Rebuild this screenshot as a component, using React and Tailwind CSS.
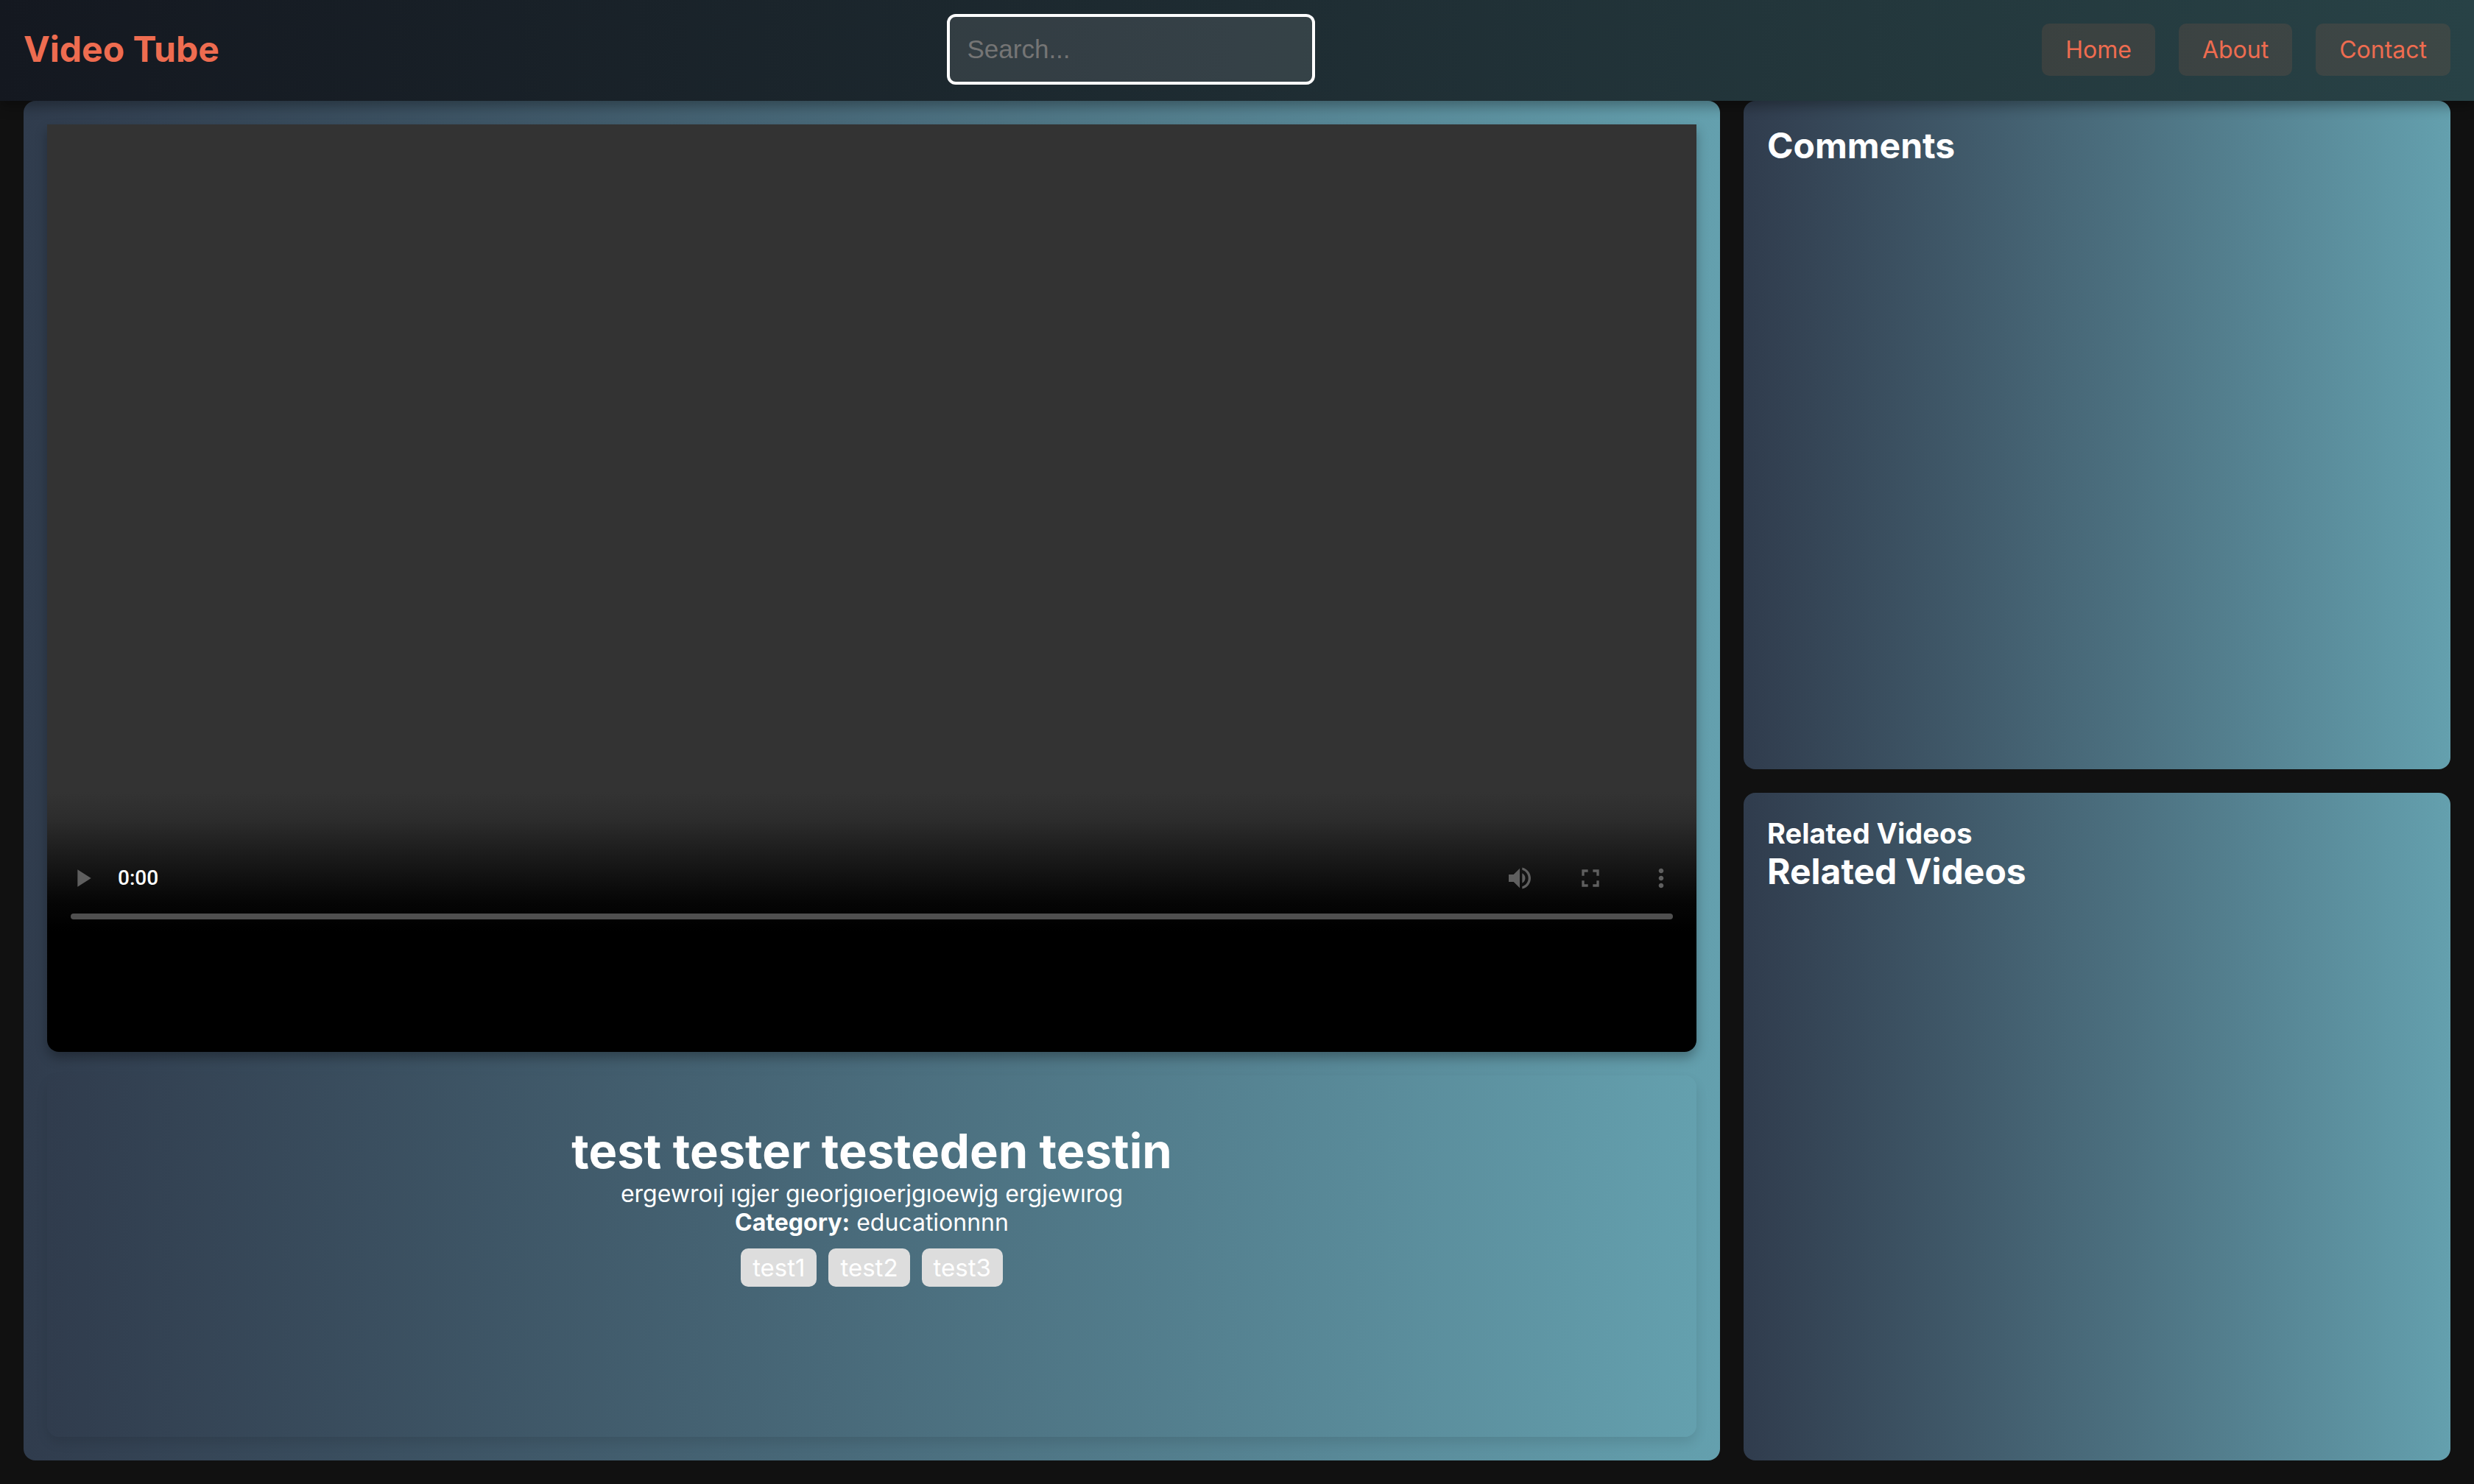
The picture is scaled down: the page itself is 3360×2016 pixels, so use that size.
const navItems = ["Home", "About", "Contact"];
const tags = ["test1", "test2", "test3"];

function Icon({ children }) {
  return (
    <svg viewBox="0 0 24 24" className="size-10 fill-[#5f5f5f]" aria-hidden="true">
      {children}
    </svg>
  );
}

function ControlButton({ label, children }) {
  return (
    <button type="button" aria-label={label} className="flex h-24 w-24 items-center justify-center">
      {children}
    </button>
  );
}

function Header() {
  return (
    <header className="relative flex items-center justify-between bg-linear-to-r from-[#141820] via-[#1e2c32] to-[#284246] px-8 pt-[19px] pb-[22px] shadow-[0_8px_16px_rgba(0,0,0,0.3)]">
      <h2 className="text-[48px] leading-[58px] font-bold text-[#ee6c50]">Video Tube</h2>
      <input
        type="search"
        aria-label="Search"
        placeholder="Search..."
        className="h-24 w-[500px] rounded-xl border-4 border-white bg-white/10 px-6 font-['Liberation_Sans',sans-serif] text-[35px] text-white outline-none placeholder:text-[#757575]"
      />
      <nav className="flex gap-8">
        {navItems.map((item) => (
          <a
            key={item}
            href="#"
            className="rounded-[10px] bg-[#ff7f50]/10 px-8 py-4 text-[32px] leading-[39px] text-[#ee6c50]"
          >
            {item}
          </a>
        ))}
      </nav>
    </header>
  );
}

function Player() {
  return (
    <section
      aria-label="Video player"
      className="flex aspect-video flex-col justify-end overflow-hidden rounded-b-2xl bg-[linear-gradient(to_bottom,#333_72%,#2c2c2c_75%,#1a1a1a_79%,#050505_84%,#000_87%)] shadow-[0_8px_16px_rgba(0,0,0,0.3)]"
    >
      <div className="flex items-center">
        <ControlButton label="Play">
          <Icon>
            <path d="M8 5v14l11-7z" />
          </Icon>
        </ControlButton>
        <span className="font-[Roboto,sans-serif] text-[28px] leading-[32px] font-medium text-white">0:00</span>
        <div className="ml-auto flex">
          <ControlButton label="Mute">
            <Icon>
              <path d="M3 9v6h4l5 5V4L7 9H3zm13.5 3c0-1.77-1.02-3.29-2.5-4.03v8.05c1.48-.73 2.5-2.25 2.5-4.02zM14 3.23v2.06c2.89.86 5 3.54 5 6.71s-2.11 5.85-5 6.71v2.06c4.01-.91 7-4.49 7-8.77s-2.99-7.86-7-8.77z" />
            </Icon>
          </ControlButton>
          <ControlButton label="Full screen">
            <Icon>
              <path d="M7 14H5v5h5v-2H7v-3zm-2-4h2V7h3V5H5v5zm12 7h-3v2h5v-5h-2v3zM14 5v2h3v3h2V5h-5z" />
            </Icon>
          </ControlButton>
          <ControlButton label="More options">
            <Icon>
              <path d="M12 8c1.1 0 2-.9 2-2s-.9-2-2-2-2 .9-2 2 .9 2 2 2zm0 2c-1.1 0-2 .9-2 2s.9 2 2 2 2-.9 2-2-.9-2-2-2zm0 6c-1.1 0-2 .9-2 2s.9 2 2 2 2-.9 2-2-.9-2-2-2z" />
            </Icon>
          </ControlButton>
        </div>
      </div>
      <div className="flex px-8 pb-[180px]">
        <input
          type="range"
          aria-label="Seek"
          defaultValue="0"
          className="h-2 w-full appearance-none rounded-full bg-[#4f4f4f] [&::-webkit-slider-thumb]:size-0 [&::-webkit-slider-thumb]:appearance-none"
        />
      </div>
    </section>
  );
}

function VideoInfo() {
  return (
    <section className="flex-1 rounded-2xl bg-linear-to-r from-[#303c4d] to-[#64a0ae] p-16 text-center shadow-[0_8px_16px_rgba(0,0,0,0.1)]">
      <h1 className="text-[65px] leading-[77px] font-bold">test tester testeden testin</h1>
      <p>ergewroıj ıgjer gıeorjgıoerjgıoewjg ergjewırog</p>
      <p>
        <strong className="font-bold">Category:</strong> educationnnn
      </p>
      <ul className="mt-4 flex justify-center gap-4">
        {tags.map((tag) => (
          <li key={tag} className="rounded-[10px] bg-[#ddd] px-4 text-[33px] leading-[52px]">
            {tag}
          </li>
        ))}
      </ul>
    </section>
  );
}

export default function App() {
  return (
    <div className="flex min-h-screen flex-col bg-[#111] font-[Inter,sans-serif] text-[32px] leading-[39px] text-white">
      <div className="z-10">
        <Header />
      </div>
      <main className="grid flex-1 grid-cols-[12fr_5fr] gap-8 px-8 pb-8">
        <div className="flex flex-col gap-8 rounded-2xl bg-linear-to-r from-[#303c4d] to-[#64a0ae] p-8">
          <Player />
          <VideoInfo />
        </div>
        <aside className="grid grid-rows-2 gap-8">
          <section className="rounded-2xl bg-linear-to-r from-[#303c4d] to-[#64a0ae] p-8">
            <h2 className="text-[48px] leading-[58px] font-bold">Comments</h2>
          </section>
          <section className="rounded-2xl bg-linear-to-r from-[#303c4d] to-[#64a0ae] p-8">
            <h3 className="text-[38px] leading-[46px] font-bold">Related Videos</h3>
            <h2 className="text-[48px] leading-[58px] font-bold">Related Videos</h2>
          </section>
        </aside>
      </main>
    </div>
  );
}
